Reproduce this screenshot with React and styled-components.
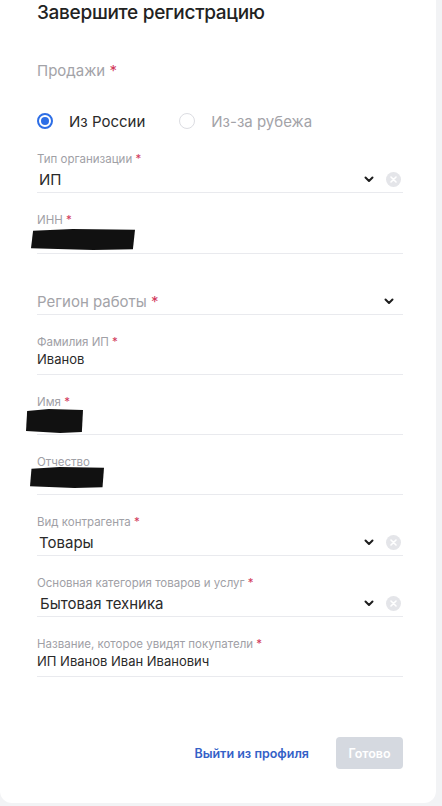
import React from 'react';
import styled, { createGlobalStyle, css } from 'styled-components';

const GlobalStyle = createGlobalStyle`
  html, body {
    margin: 0;
    padding: 0;
    background: #f2f3f5;
  }
  body {
    font-family: Inter, 'Noto Sans', sans-serif;
    color: #262626;
  }
`;

const Card = styled.div`
  width: 436px;
  min-height: 803px;
  box-sizing: border-box;
  background: #fff;
  border-bottom-left-radius: 12px;
  border-bottom-right-radius: 12px;
  padding: 0 33px 0 37px;
  display: flex;
  flex-direction: column;
`;

const Title = styled.h1`
  margin: 0;
  font-size: 19px;
  line-height: 26px;
  font-weight: 500;
  color: #222;
  letter-spacing: -0.3px;
`;

const Section = styled.div`
  margin-top: 34px;
  font-size: 15px;
  line-height: 22px;
  color: #a3a3a8;
`;

const Star = styled.span`
  color: #d23a5c;
`;

const RadioRow = styled.div`
  margin-top: 27px;
  height: 24px;
  display: flex;
  align-items: center;
  gap: 34px;
`;

const RadioOption = styled.label`
  display: flex;
  align-items: center;
  gap: 16px;
  font-size: 15px;
  color: ${({ checked }) => (checked ? '#2a2a2a' : '#a3a3a8')};
`;

const RadioDot = styled.span`
  width: 16px;
  height: 16px;
  box-sizing: border-box;
  border-radius: 50%;
  display: inline-flex;
  align-items: center;
  justify-content: center;
  ${({ checked }) =>
    checked
      ? css`
          border: 2px solid #2d6ee6;
          &::after {
            content: '';
            width: 8px;
            height: 8px;
            border-radius: 50%;
            background: #2d6ee6;
          }
        `
      : css`
          border: 1.5px solid #dcdde2;
        `}
`;

const Fields = styled.div`
  margin-top: 19px;
  display: flex;
  flex-direction: column;
  gap: 20px;
`;

const Field = styled.div`
  display: flex;
  flex-direction: column;
  border-bottom: 1px solid #e9eaee;
`;

const Label = styled.div`
  height: 14px;
  font-size: 11.5px;
  line-height: 14px;
  color: #a0a0a6;
`;

const ValueRow = styled.div`
  display: flex;
  ${({ small }) =>
    small
      ? css`
          height: 25px;
          align-items: flex-start;
          line-height: 21px;
        `
      : css`
          height: 26px;
          align-items: center;
        `}
`;

const Value = styled.div`
  flex: 1;
  font-size: ${({ small }) => (small ? '13px' : '15px')};
  color: ${({ placeholder }) => (placeholder ? '#a3a3a8' : '#2a2a2a')};
  padding-left: ${({ indent }) => indent || 0}px;
`;

const Redaction = styled.div`
  align-self: flex-start;
  width: ${({ w }) => w}px;
  height: ${({ h }) => h}px;
  margin-left: ${({ shift }) => shift}px;
  margin-top: ${({ top }) => top || 0}px;
  background: #111;
  clip-path: polygon(2% 8%, 40% 0, 100% 4%, 98% 96%, 60% 100%, 0 92%);
`;

const Icons = styled.div`
  display: flex;
  align-items: center;
  gap: 12px;
  padding-right: ${({ pad }) => pad || 0}px;
`;

const Clear = styled.span`
  width: 15px;
  height: 15px;
  border-radius: 50%;
  background: #e4e5e9;
  display: inline-flex;
  align-items: center;
  justify-content: center;
`;

const Footer = styled.div`
  margin-top: 60px;
  display: flex;
  justify-content: flex-end;
  align-items: center;
  gap: 27px;
`;

const LinkButton = styled.button`
  border: none;
  background: none;
  padding: 0;
  font-family: inherit;
  font-size: 12.5px;
  font-weight: 600;
  color: #3461c7;
`;

const Primary = styled.button`
  width: 67px;
  height: 32px;
  border: none;
  border-radius: 4px;
  background: #d5d9e0;
  color: #fff;
  font-family: inherit;
  font-size: 12.5px;
  font-weight: 600;
`;

const Chevron = () => (
  <svg width="10" height="7" viewBox="0 0 10 7">
    <path d="M1.5 1.5 L5 5 L8.5 1.5" fill="none" stroke="#1e1e1e" strokeWidth="2" strokeLinecap="round" strokeLinejoin="round" />
  </svg>
);

const ClearIcon = () => (
  <Clear>
    <svg width="7" height="7" viewBox="0 0 7 7">
      <path d="M1 1 L6 6 M6 1 L1 6" stroke="#fff" strokeWidth="1.6" strokeLinecap="round" />
    </svg>
  </Clear>
);

const Req = ({ children }) => (
  <>
    {children} <Star>*</Star>
  </>
);

export default function App() {
  return (
    <>
      <GlobalStyle />
      <Card>
        <Title>Завершите регистрацию</Title>
        <Section>
          <Req>Продажи</Req>
        </Section>
        <RadioRow>
          <RadioOption checked>
            <RadioDot checked />
            Из России
          </RadioOption>
          <RadioOption>
            <RadioDot />
            Из-за рубежа
          </RadioOption>
        </RadioRow>

        <Fields>
          <Field>
            <Label><Req>Тип организации</Req></Label>
            <ValueRow>
              <Value indent={2}>ИП</Value>
              <Icons pad={2}>
                <Chevron />
                <ClearIcon />
              </Icons>
            </ValueRow>
          </Field>

          <Field>
            <Label><Req>ИНН</Req></Label>
            <ValueRow>
              <Redaction w={104} h={21} shift={-6} top={2} />
            </ValueRow>
          </Field>

          <Field>
            <Label />
            <ValueRow>
              <Value placeholder>
                <Req>Регион работы</Req>
              </Value>
              <Icons pad={9}>
                <Chevron />
              </Icons>
            </ValueRow>
          </Field>

          <Field>
            <Label><Req>Фамилия ИП</Req></Label>
            <ValueRow small>
              <Value small>Иванов</Value>
            </ValueRow>
          </Field>

          <Field>
            <Label><Req>Имя</Req></Label>
            <ValueRow small>
              <Redaction w={57} h={24} shift={-11} />
            </ValueRow>
          </Field>

          <Field>
            <Label>Отчество</Label>
            <ValueRow small>
              <Redaction w={74} h={21} shift={-7} top={-2} />
            </ValueRow>
          </Field>

          <Field>
            <Label><Req>Вид контрагента</Req></Label>
            <ValueRow>
              <Value indent={2}>Товары</Value>
              <Icons pad={2}>
                <Chevron />
                <ClearIcon />
              </Icons>
            </ValueRow>
          </Field>

          <Field>
            <Label><Req>Основная категория товаров и услуг</Req></Label>
            <ValueRow>
              <Value indent={3}>Бытовая техника</Value>
              <Icons pad={2}>
                <Chevron />
                <ClearIcon />
              </Icons>
            </ValueRow>
          </Field>

          <Field>
            <Label><Req>Название, которое увидят покупатели</Req></Label>
            <ValueRow small>
              <Value small>ИП Иванов Иван Иванович</Value>
            </ValueRow>
          </Field>
        </Fields>

        <Footer>
          <LinkButton>Выйти из профиля</LinkButton>
          <Primary>Готово</Primary>
        </Footer>
      </Card>
    </>
  );
}
